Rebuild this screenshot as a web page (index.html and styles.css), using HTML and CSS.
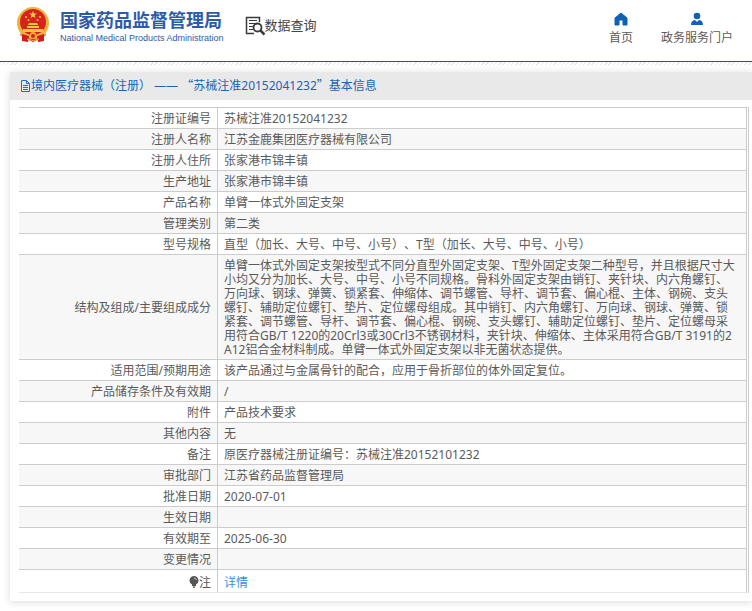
FILE: index.html
```html
<!DOCTYPE html>
<html lang="zh-CN">
<head>
    <meta charset="UTF-8">
    <meta name="viewport" content="width=device-width, initial-scale=1.0">
    <title>国家药品监督管理局 数据查询</title>
    <link rel="stylesheet" href="styles.css">
</head>
<body>
    <header class="header">
        <a href="#home" class="logo">
            <svg class="emblem" viewBox="0 0 34 36" aria-hidden="true">
                <path d="M6 25h22l2 3-3 2-1 4-5-1-4 2-4-2-5 1-1-4-3-2z" fill="#d6201c"/>
                <circle cx="17" cy="16" r="16" fill="#e9b53c"/>
                <circle cx="17" cy="15" r="13" fill="#d9221c"/>
                <path d="M17 4l1 2.600h2.800l-2.200 1.700.8 2.700-2.400-1.600-2.400 1.600.8-2.700-2.200-1.700H16z" fill="#f8d04c"/>
                <circle cx="10" cy="10" r="1" fill="#f8c94a"/>
                <circle cx="12.500" cy="13" r="1" fill="#f8c94a"/>
                <circle cx="21.500" cy="13" r="1" fill="#f8c94a"/>
                <circle cx="24" cy="10" r="1" fill="#f8c94a"/>
                <path d="M12 18l1-2h8l1 2zM11 19h12v2H11zM7 22h20v3H7z" fill="#f4c446"/>
                <path d="M4 25q6 5 10 3a3 3 0 0 1 6 0q4 2 10-3l-2 5q-5 2-8 0-3 3-6 0-3 2-8 0z" fill="#edb63a"/>
                <path d="M6 27l0 7 6 1 1-6zM28 27l0 7-6 1-1-6z" fill="#cf1d1b"/>
                <circle cx="17" cy="29" r="2" fill="#d9221c"/>
                <path d="M11 32q6 3 12 0" fill="none" stroke="#edb63a"/>
            </svg>
            <span class="logo-text">
                <strong>国家药品监督管理局</strong>
                <span class="logo-en">National Medical Products Administration</span>
            </span>
        </a>
        <a href="#search" class="query">
            <svg class="query-icon" viewBox="0 0 20 20" aria-hidden="true" fill="none" stroke="#3a3a3a">
                <path d="M14.500 6V1.500h-13v16H9" stroke-width="1.500"/>
                <path d="M4 4.500h8M4 7.500h6M4 10.500h4M4 13.500h4"/>
                <circle cx="12.500" cy="11.500" r="4" stroke-width="1.800" fill="#fff"/>
                <path d="M15.500 14.500l4 4" stroke-width="2.500"/>
            </svg>
            <span>数据查询</span>
        </a>
        <nav class="nav">
            <a href="#index">
                <svg viewBox="0 0 14 14" aria-hidden="true"><path d="M7 1L1 6v7h4V8h4v5h4V6z" fill="#1160b8" stroke="#1160b8" stroke-linejoin="round"/></svg>
                <span>首页</span>
            </a>
            <a href="#portal">
                <svg viewBox="0 0 14 14" aria-hidden="true"><circle cx="7" cy="4" r="3.300" fill="#1160b8"/><path d="M1 13q0-4.500 4-5l2 2 2-2q4 .5 4 5z" fill="#1160b8"/></svg>
                <span>政务服务门户</span>
            </a>
        </nav>
    </header>
    <div class="stripe"></div>

    <main class="panel">
        <h1 class="panel-title">
            <svg viewBox="0 0 11 12" aria-hidden="true" fill="none" stroke="#2b6cbd"><path d="M1.500.5h5l3 3v8h-8zM6.500.5v3h3M3 5.500h5M3 7.500h5M3 9.500h5"/></svg>
            <span>境内医疗器械（注册） —— <span class="quote">“</span>苏械注准20152041232<span class="quote">”</span>基本信息</span>
        </h1>
        <div class="table-wrap">
            <table class="info">
                <tbody>
                    <tr><th scope="row">注册证编号</th><td>苏械注准20152041232</td></tr>
                    <tr><th scope="row">注册人名称</th><td>江苏金鹿集团医疗器械有限公司</td></tr>
                    <tr><th scope="row">注册人住所</th><td>张家港市锦丰镇</td></tr>
                    <tr><th scope="row">生产地址</th><td>张家港市锦丰镇</td></tr>
                    <tr><th scope="row">产品名称</th><td>单臂一体式外固定支架</td></tr>
                    <tr><th scope="row">管理类别</th><td>第二类</td></tr>
                    <tr><th scope="row">型号规格</th><td>直型（加长、大号、中号、小号）、T型（加长、大号、中号、小号）</td></tr>
                    <tr><th scope="row">结构及组成/主要组成成分</th><td>单臂一体式外固定支架按型式不同分直型外固定支架、T型外固定支架二种型号，并且根据尺寸大小均又分为加长、大号、中号、小号不同规格。骨科外固定支架由销钉、夹针块、内六角螺钉、万向球、钢球、弹簧、锁紧套、伸缩体、调节螺管、导杆、调节套、偏心棍、主体、钢碗、支头螺钉、辅助定位螺钉、垫片、定位螺母组成。其中销钉、内六角螺钉、万向球、钢球、弹簧、锁紧套、调节螺管、导杆、调节套、偏心棍、钢碗、支头螺钉、辅助定位螺钉、垫片、定位螺母采用符合GB/T 1220的20Crl3或30Crl3不锈钢材料，夹针块、伸缩体、主体采用符合GB/T 3191的2A12铝合金材料制成。单臂一体式外固定支架以非无菌状态提供。</td></tr>
                    <tr><th scope="row">适用范围/预期用途</th><td>该产品通过与金属骨针的配合，应用于骨折部位的体外固定复位。</td></tr>
                    <tr><th scope="row">产品储存条件及有效期</th><td>/</td></tr>
                    <tr><th scope="row">附件</th><td>产品技术要求</td></tr>
                    <tr><th scope="row">其他内容</th><td>无</td></tr>
                    <tr><th scope="row">备注</th><td>原医疗器械注册证编号：苏械注准20152101232</td></tr>
                    <tr><th scope="row">审批部门</th><td>江苏省药品监督管理局</td></tr>
                    <tr><th scope="row">批准日期</th><td>2020-07-01</td></tr>
                    <tr><th scope="row">生效日期</th><td></td></tr>
                    <tr><th scope="row">有效期至</th><td>2025-06-30</td></tr>
                    <tr><th scope="row">变更情况</th><td></td></tr>
                    <tr class="note">
                        <th scope="row"><svg viewBox="0 0 10 12" aria-hidden="true"><path d="M5 0a4.500 4.500 0 0 1 2 8.500V10H3V8.500A4.500 4.500 0 0 1 5 0zM3.500 10.500h3L5.500 12h-1z" fill="#555"/><path d="M5 2a2.500 2.500 0 0 1 2.300 2" fill="none" stroke="#ccc"/></svg>注</th>
                        <td><a href="#detail">详情</a></td>
                    </tr>
                </tbody>
            </table>
        </div>
    </main>
</body>
</html>
```

FILE: styles.css
```css
body {
    margin: 0;
    font-family: "Noto Sans", "Noto Sans CJK SC", sans-serif;
    font-size: 12px;
    line-height: 14px;
    color: #5a5a5a;
    background-color: #fff;
    text-spacing-trim: space-all;
}
a {
    text-decoration: none;
    color: inherit;
}
.header {
    display: flex;
    align-items: flex-start;
    height: 61px;
    padding: 0 19px 0 16px;
    border-bottom: 1px solid #1d5a92;
}
.logo {
    display: flex;
    gap: 10px;
    padding-top: 7px;
    color: #2d5ba8;
}
.emblem {
    width: 34px;
    height: 36px;
}
.logo-text {
    display: flex;
    flex-direction: column;
    padding-top: 2px;
}
.logo-text strong {
    font-size: 18px;
    line-height: 22px;
}
.logo-en {
    font-family: "Liberation Sans", Arial, sans-serif;
    font-size: 9px;
    line-height: 14px;
    white-space: nowrap;
}
.query {
    display: flex;
    align-items: center;
    margin-left: 21px;
    padding-top: 14px;
    color: #444;
    font-size: 13px;
    line-height: 20px;
}
.query-icon {
    width: 20px;
    height: 20px;
    margin-top: 2px;
}
.nav {
    display: flex;
    gap: 28px;
    margin-left: auto;
    padding-top: 12px;
}
.nav a {
    display: flex;
    flex-direction: column;
    align-items: center;
    gap: 5px;
}
.nav svg {
    width: 14px;
    height: 14px;
}
.stripe {
    height: 3px;
    background: repeating-linear-gradient(135deg, #e3e8ed 0 1px, #fff 1px 3px);
}
.panel {
    margin: 7px 0 10px 10px;
    padding-bottom: 8px;
    background-color: #fff;
    box-shadow: 0 1px 8px rgba(0, 0, 0, 0.15);
}
.panel-title {
    display: flex;
    align-items: center;
    margin: 0;
    padding: 7px 10px;
    background-color: #e9e9e9;
    color: #1b62b8;
    font-size: 12px;
    font-weight: normal;
    line-height: 14px;
}
.panel-title svg {
    width: 11px;
    height: 12px;
}
.quote {
    font-family: "Noto Sans CJK SC", sans-serif;
    line-height: 1;
}
.table-wrap {
    margin: 7px 3px 0 9px;
    padding-right: 1px;
    border-right: 1px solid #ccc;
}
.info {
    width: 100%;
    border-collapse: separate;
    border-spacing: 0;
    border-top: 1px solid #ccc;
}
.info th,
.info td {
    padding: 4px 8px 2px 6px;
    height: 14px;
    border-right: 1px solid #ccc;
    border-bottom: 1px solid #ccc;
    text-align: left;
    word-break: break-all;
}
.info th {
    width: 186px;
    padding-right: 6px;
    font-weight: normal;
    text-align: right;
}
.info tr:nth-child(even) {
    background-color: #f7f7f7;
}
.info .note th,
.info .note td {
    padding-top: 6px;
    border-bottom-color: #e6e8ee;
}
.note svg {
    width: 10px;
    height: 12px;
    vertical-align: -1px;
}
.note a {
    color: #3b8de0;
}
```
